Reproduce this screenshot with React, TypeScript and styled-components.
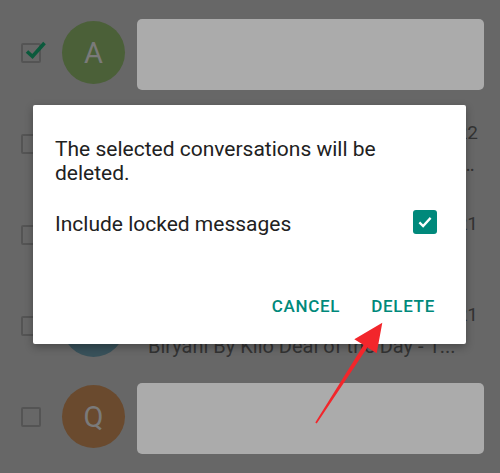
import React from "react";
import styled, { createGlobalStyle } from "styled-components";

const Global = createGlobalStyle`
  html, body { margin: 0; padding: 0; }
  body { background: #676767; font-family: Roboto, "Noto Sans", sans-serif; }
`;

const Screen = styled.div`
  position: relative;
  width: 500px;
  height: 473px;
  overflow: hidden;
  background: #676767;
`;

const List = styled.div`
  display: flex;
  flex-direction: column;
  padding-top: 7px;
`;

const Row = styled.div`
  display: flex;
  align-items: center;
  height: 91px;
  padding: 0 16px 0 21px;
  box-sizing: border-box;
`;

const Box = styled.div`
  position: relative;
  flex: none;
  width: 20px;
  height: 20px;
  box-sizing: border-box;
  border: 2px solid #545454;
  border-radius: 2px;
`;

const BoxCheck = styled.svg`
  position: absolute;
  left: 1px;
  top: -5px;
  width: 24px;
  height: 20px;
`;

const Avatar = styled.div<{ $bg: string }>`
  flex: none;
  width: 63px;
  height: 63px;
  margin-left: 21px;
  border-radius: 50%;
  background: ${(p) => p.$bg};
  color: #7a7a7a;
  display: flex;
  align-items: center;
  justify-content: center;
  font-size: 29px;
  font-weight: 400;
`;

const Redaction = styled.div`
  flex: 1;
  align-self: stretch;
  margin: 12px 0 8px 12px;
  background: #ababab;
  border-radius: 5px;
`;

const Content = styled.div`
  flex: 1;
  min-width: 0;
  margin: 8px 6px 0 23px;
  display: flex;
  flex-direction: column;
  gap: 7px;
`;

const TopLine = styled.div`
  display: flex;
  justify-content: space-between;
  align-items: baseline;
  font-size: 20px;
  line-height: 24px;
  color: #2e2e2e;
`;

const Name = styled.span`
  font-weight: 500;
`;

const DateText = styled.span`
  font-size: 19px;
  color: #333333;
`;

const Snippet = styled.div`
  font-size: 20px;
  line-height: 24px;
  color: #333333;
  white-space: nowrap;
  overflow: hidden;
  text-overflow: ellipsis;
`;

const Dialog = styled.div`
  position: absolute;
  left: 33px;
  top: 105px;
  width: 433px;
  height: 239px;
  box-sizing: border-box;
  background: #ffffff;
  border-radius: 2px;
  box-shadow: 0 3px 8px rgba(0, 0, 0, 0.3);
  padding: 32px 23px 16px 22px;
  display: flex;
  flex-direction: column;
`;

const Message = styled.p`
  margin: 0;
  font-size: 21px;
  line-height: 24px;
  color: #212121;
`;

const OptionRow = styled.label`
  display: flex;
  align-items: center;
  justify-content: space-between;
  height: 48px;
  margin-top: 13px;
  padding-right: 6px;
  font-size: 21px;
  color: #212121;
`;

const OptionText = styled.span`
  margin-top: 4px;
`;

const TealBox = styled.span`
  width: 24px;
  height: 24px;
  border-radius: 3px;
  background: #00897b;
  display: flex;
  align-items: center;
  justify-content: center;
`;

const Actions = styled.div`
  margin-top: auto;
  display: flex;
  justify-content: flex-end;
  gap: 15px;
`;

const TextButton = styled.button`
  border: 0;
  background: transparent;
  padding: 0 8px;
  height: 44px;
  font-family: Roboto, "Noto Sans", sans-serif;
  font-size: 17px;
  font-weight: 500;
  letter-spacing: 0.7px;
  color: #00897b;
`;

const Annotation = styled.svg`
  position: absolute;
  left: 0;
  top: 0;
  width: 500px;
  height: 473px;
  pointer-events: none;
`;

const rows = [
  { kind: "bar", checked: true, letter: "A", color: "#4b6038" },
  {
    kind: "text",
    letter: "V",
    color: "#2f4a5e",
    name: "VK-HDFCBK",
    date: "Jul 22",
    snippet: "Your OTP for the transaction of Rs. 1,249.00 at Swiggy is valid for 10 minutes only",
  },
  { kind: "text", letter: "J", color: "#5a3d5e", name: "JD-AIRTEL", date: "Jul 21", snippet: "Recharge done" },
  {
    kind: "text",
    letter: "B",
    color: "#38515a",
    name: "BK-BIRYNI",
    date: "Jul 21",
    snippet: "Biryani By Kilo Deal of the Day - 1...",
  },
  { kind: "bar", checked: false, letter: "Q", color: "#6a4a2e" },
];

export default function App() {
  return (
    <Screen>
      <Global />
      <List>
        {rows.map((r, i) => (
          <Row key={i}>
            <Box>
              {r.checked && (
                <BoxCheck viewBox="0 0 24 20">
                  <path d="M3 11.5 L8.5 16.5 L20.5 3" fill="none" stroke="#0b5a3c" strokeWidth="3.6" />
                </BoxCheck>
              )}
            </Box>
            <Avatar $bg={r.color}>{r.letter}</Avatar>
            {r.kind === "bar" ? (
              <Redaction />
            ) : (
              <Content>
                <TopLine>
                  <Name>{r.name}</Name>
                  <DateText>{r.date}</DateText>
                </TopLine>
                <Snippet>{r.snippet}</Snippet>
              </Content>
            )}
          </Row>
        ))}
      </List>

      <Dialog>
        <Message>The selected conversations will be deleted.</Message>
        <OptionRow>
          <OptionText>Include locked messages</OptionText>
          <TealBox>
            <svg width="18" height="18" viewBox="0 0 24 24">
              <path d="M4.5 12.5 L9.5 17.5 L19.5 6.5" fill="none" stroke="#ffffff" strokeWidth="3" />
            </svg>
          </TealBox>
        </OptionRow>
        <Actions>
          <TextButton>CANCEL</TextButton>
          <TextButton>DELETE</TextButton>
        </Actions>
      </Dialog>

      <Annotation viewBox="0 0 500 473">
        <polygon
          points="315.3,422.6 363.6,344.9 354.3,339.3 382.3,322.7 376.7,353.3 367.4,347.4 316.7,423.4"
          fill="#f2262b"
        />
      </Annotation>
    </Screen>
  );
}
